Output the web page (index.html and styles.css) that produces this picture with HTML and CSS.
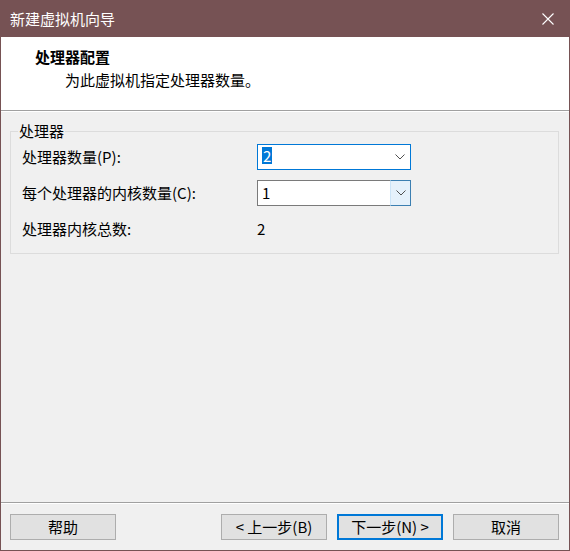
FILE: index.html
```html
<!DOCTYPE html>
<html lang="zh-CN">
<head>
<meta charset="utf-8">
<title>新建虚拟机向导</title>
<link rel="stylesheet" href="styles.css">
</head>
<body>
<div class="window">
  <div class="titlebar">
    <span class="title">新建虚拟机向导</span>
    <svg class="close" width="12" height="12" viewBox="0 0 12 12"><path d="M0.5 0.5L11.5 11.5M11.5 0.5L0.5 11.5" stroke="#ffffff" stroke-width="1.1" fill="none"/></svg>
  </div>
  <div class="header">
    <div class="heading">处理器配置</div>
    <div class="subheading">为此虚拟机指定处理器数量。</div>
  </div>
  <div class="main">
    <fieldset class="group">
      <legend class="legend">处理器</legend>
      <div class="grid">
        <div class="label">处理器数量(P):</div>
        <div class="combo focused">
          <span class="value"><span class="sel">2</span></span>
          <span class="arrow"><svg width="10" height="6" viewBox="0 0 10 6"><path d="M0.5 0.5L5 5L9.5 0.5" stroke="#505050" stroke-width="1" fill="none"/></svg></span>
        </div>
        <div class="label">每个处理器的内核数量(C):</div>
        <div class="combo hot">
          <span class="value">1</span>
          <span class="arrow btn"><svg width="10" height="6" viewBox="0 0 10 6"><path d="M0.5 0.5L5 5L9.5 0.5" stroke="#505050" stroke-width="1" fill="none"/></svg></span>
        </div>
        <div class="label">处理器内核总数:</div>
        <div class="plain">2</div>
      </div>
    </fieldset>
  </div>
  <div class="footer">
    <button class="button">帮助</button>
    <div class="spacer"></div>
    <button class="button">&lt; 上一步(B)</button>
    <button class="button default">下一步(N) &gt;</button>
    <button class="button">取消</button>
  </div>
</div>
</body>
</html>
```
FILE: styles.css
```css
* { box-sizing: border-box; }
html, body {
  margin: 0;
  padding: 0;
  background: #765254;
}
body {
  font-family: "Noto Sans CJK SC", "Noto Sans", sans-serif;
  font-size: 15px;
  color: #000;
}
.window {
  width: 570px;
  height: 551px;
  border: 1px solid #765254;
  border-top: none;
  background: #f0f0f0;
  display: flex;
  flex-direction: column;
}
.titlebar {
  height: 37px;
  background: #765254;
  color: #ffffff;
  display: flex;
  align-items: center;
  padding: 0 15px 0 9px;
  flex: none;
}
.title {
  flex: 1;
  line-height: 20px;
  padding-top: 1px;
}
.close { display: block; margin-top: 1px; }
.header {
  height: 74px;
  background: #ffffff;
  border-bottom: 1px solid #a0a0a0;
  box-shadow: 0 1px 0 #ffffff;
  padding: 9px 0 0 34px;
  flex: none;
}
.heading {
  font-weight: bold;
  line-height: 22px;
}
.subheading {
  line-height: 22px;
  padding-left: 30px;
  margin-top: 1px;
}
.main {
  flex: 1;
  padding: 10px 10px 0 9px;
  border-bottom: 1px solid #a0a0a0;
}
.group {
  margin: 0;
  border: 1px solid #dcdcdc;
  padding: 3px 11px 11px 11px;
}
.legend {
  padding: 0 1px;
  margin-left: -4px;
  line-height: 20px;
}
.grid {
  display: grid;
  grid-template-columns: 235px 154px;
  grid-auto-rows: 26px;
  row-gap: 10px;
  align-items: center;
}
.label {
  line-height: 20px;
}
.combo {
  height: 26px;
  background: #ffffff;
  border: 1px solid #7a7a7a;
  display: flex;
}
.combo.focused { border-color: #0078d7; }
.combo .value {
  flex: 1;
  padding-left: 4px;
  line-height: 24px;
}
.sel {
  background: #0078d7;
  color: #ffffff;
  display: inline-block;
  line-height: 17px;
  padding: 0 1px;
  vertical-align: 1px;
}
.arrow {
  width: 20px;
  display: flex;
  align-items: center;
  justify-content: center;
}
.arrow svg { display: block; }
.arrow.btn {
  background: #e5f1fb;
  border-left: 1px solid #cce4f7;
  margin: -1px -1px -1px 0;
  border-top: 1px solid #3c7fb1;
  border-right: 1px solid #3c7fb1;
  border-bottom: 1px solid #3c7fb1;
  width: 21px;
}
.plain { line-height: 20px; }
.footer {
  height: 47px;
  flex: none;
  display: flex;
  align-items: flex-start;
  padding: 10px 10px 0 9px;
  gap: 10px;
  border-top: 1px solid #ffffff;
}
.spacer { flex: 1; }
.button {
  width: 106px;
  height: 26px;
  background: #e1e1e1;
  border: 1px solid #adadad;
  font-family: inherit;
  font-size: 15px;
  color: #000;
  padding: 0;
  line-height: 22px;
}
.button.default {
  border: 2px solid #0078d7;
}
```
